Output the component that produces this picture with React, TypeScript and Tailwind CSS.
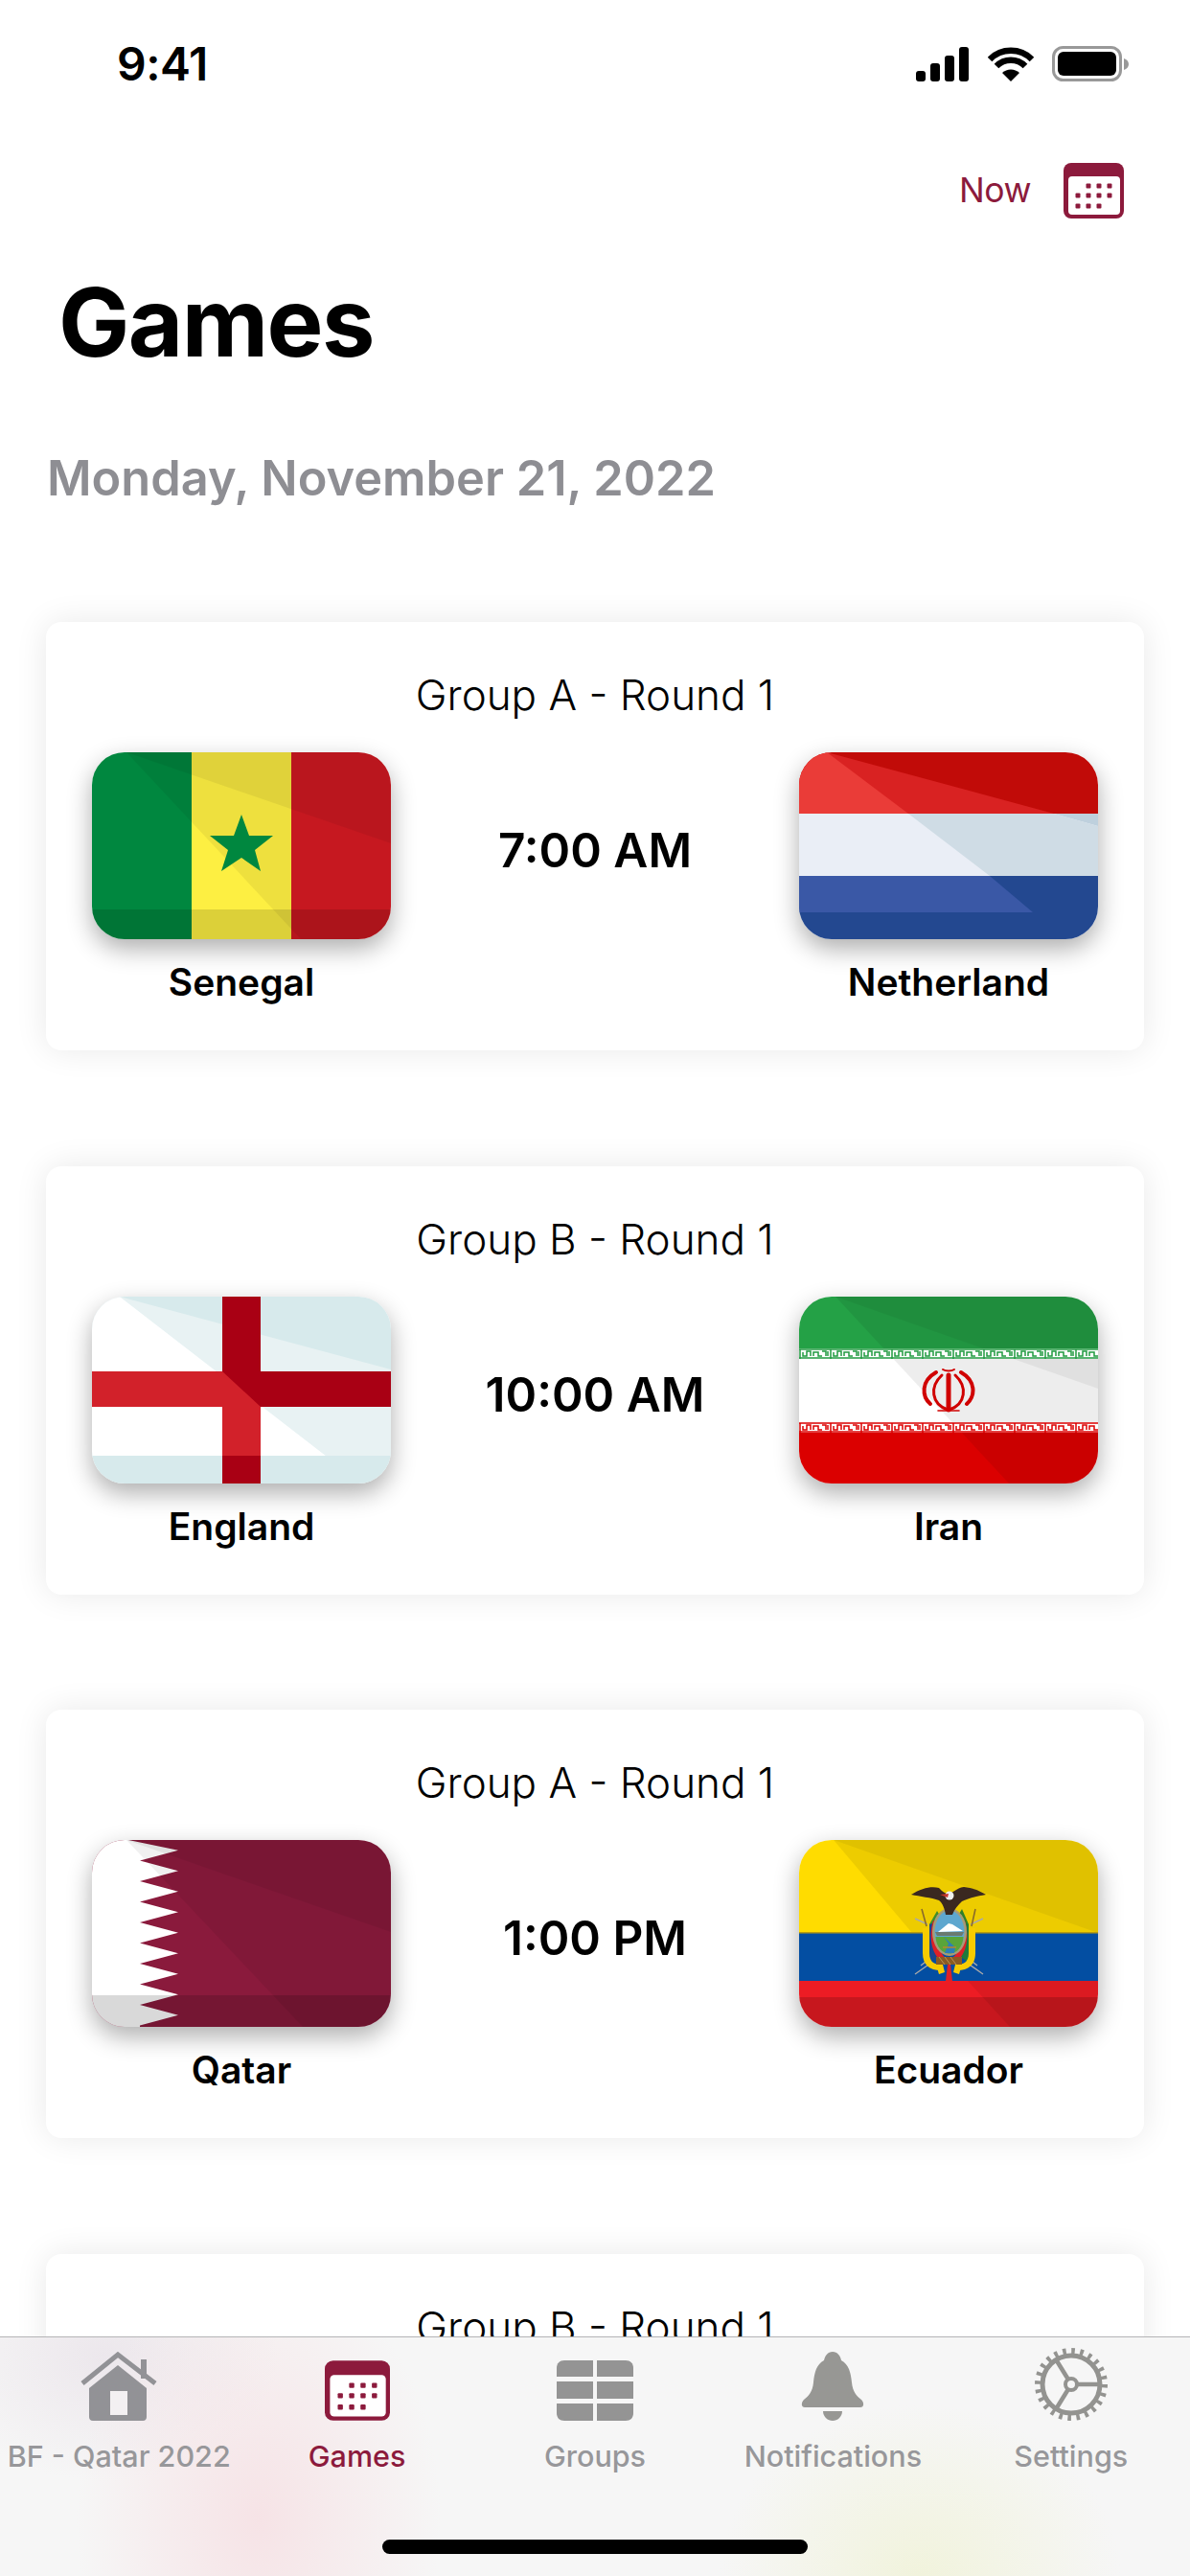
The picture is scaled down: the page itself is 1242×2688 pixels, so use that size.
const MAROON = "#8c1a3c";

function StatusIcons() {
  return (
    <div className="flex items-center">
      <svg width="56" height="36" viewBox="0 0 56 36" fill="#000">
        <rect x="0" y="25" width="10" height="11" rx="3" />
        <rect x="15" y="17" width="10" height="19" rx="3" />
        <rect x="30" y="9" width="10" height="27" rx="3" />
        <rect x="45" y="0" width="10" height="36" rx="3" />
      </svg>
      <svg className="ml-[19px]" width="48" height="36" viewBox="0 0 48 36" fill="none">
        <path d="M24 36 L15 27 A13 13 0 0 1 33 27 Z" fill="#000" />
        <path d="M9 20 A21 21 0 0 1 39 20" stroke="#000" strokeWidth="6.5" />
        <path d="M2 13 A31 31 0 0 1 46 13" stroke="#000" strokeWidth="6.5" />
      </svg>
      <svg className="ml-[19px]" width="80" height="38" viewBox="0 0 80 38" fill="none">
        <rect x="1.5" y="1.5" width="70" height="34" rx="10" stroke="#999" strokeWidth="3" />
        <rect x="6" y="6" width="61" height="25" rx="6" fill="#000" />
        <path d="M75 13 C78 14 80 16 80 19 C80 22 78 24 75 25 Z" fill="#999" />
      </svg>
    </div>
  );
}

function CalendarIcon({ w, h }: { w: number; h: number }) {
  const dots = [
    [26, 24], [37, 24], [48, 24],
    [15, 34], [26, 34], [37, 34], [48, 34],
    [15, 45], [26, 45], [37, 45],
  ];
  return (
    <svg width={w} height={h} viewBox="0 0 63 58">
      <rect x="0" y="0" width="63" height="58" rx="8" fill={MAROON} />
      <rect x="5" y="14" width="54" height="40" rx="4" fill="#fff" />
      {dots.map(([x, y]) => (
        <rect key={`${x}-${y}`} x={x - 2.5} y={y - 2.5} width="5" height="5" rx="1" fill={MAROON} />
      ))}
    </svg>
  );
}

function Senegal() {
  return (
    <svg viewBox="0 0 312 195" className="block w-full h-full">
      <rect width="104" height="195" fill="#00873f" />
      <rect x="104" width="104" height="195" fill="#fdef42" />
      <rect x="208" width="104" height="195" fill="#d31a22" />
      <polygon points="36,0 312,0 312,195 218,195" fill="#000" opacity="0.06" />
      <polygon points="36,0 312,0 312,95" fill="#000" opacity="0.06" />
      <rect y="164" width="312" height="31" fill="#000" opacity="0.13" />
      <polygon fill="#00873f" points="156,65 164,87 189,87 170,102 176,124 156,110 135,124 142,102 123,87 148,87" />
    </svg>
  );
}

function Netherlands() {
  return (
    <svg viewBox="0 0 312 195" className="block w-full h-full">
      <rect width="312" height="64" fill="#c10b08" />
      <rect y="64" width="312" height="65" fill="#eaeef6" />
      <rect y="129" width="312" height="66" fill="#234890" />
      <polygon points="29,0 266,64 0,64 0,0" fill="#d92222" />
      <polygon points="266,64 312,64 312,77" fill="#bed0dd" />
      <polygon points="114,64 266,64 312,77 312,129 199,129" fill="#cfdce5" />
      <polygon points="0,0 29,0 114,64 0,64" fill="#ea3c38" />
      <polygon points="0,129 199,129 244,167 0,167" fill="#3a58a6" />
    </svg>
  );
}

function England() {
  return (
    <svg viewBox="0 0 312 195" className="block w-full h-full">
      <rect width="312" height="195" fill="#d7eaec" />
      <polygon points="29,0 312,76 312,166 244,166" fill="#e8f2f3" />
      <polygon points="0,0 29,0 244,166 0,166" fill="#fff" />
      <rect x="136" width="40" height="195" fill="#a90014" />
      <rect y="78" width="312" height="37" fill="#a90014" />
      <polygon points="0,78 136,78 176,115 176,166 136,166 136,115 0,115" fill="#d2212a" />
    </svg>
  );
}

function IranEmblem() {
  return (
    <g fill="none" stroke="#d00000" strokeLinecap="round">
      <path d="M156 82 V118" strokeWidth="5" />
      <path d="M149 82 C136 94 138 112 155 118" strokeWidth="3" />
      <path d="M163 82 C176 94 174 112 157 118" strokeWidth="3" />
      <path d="M143 79 C127 88 128 104 137 112" strokeWidth="4" />
      <path d="M169 79 C185 88 184 104 175 112" strokeWidth="4" />
      <path d="M150 76 C153 78 159 78 162 76" strokeWidth="2" />
      <path d="M145 119 H167" strokeWidth="1.6" />
    </g>
  );
}

function Iran() {
  const kufi = "M0 1 H32 M0 10 H32 M1 1 V11 M4 4 V8 H8 V3 H12 V8 M15 8 V4 H20 V8 H24 M24 3 H28 V8 M30 3 V8";
  return (
    <svg viewBox="0 0 312 195" className="block w-full h-full">
      <defs>
        <pattern id="kufi-g" width="32" height="11" patternUnits="userSpaceOnUse" y="54">
          <path d={kufi} fill="none" stroke="#1f9a40" strokeWidth="1.5" />
        </pattern>
        <pattern id="kufi-r" width="32" height="11" patternUnits="userSpaceOnUse" y="131">
          <path d={kufi} fill="none" stroke="#db0000" strokeWidth="1.5" />
        </pattern>
      </defs>
      <rect width="312" height="54" fill="#24a146" />
      <rect y="54" width="312" height="87" fill="#fff" />
      <rect y="141" width="312" height="54" fill="#db0000" />
      <polygon points="38,0 312,0 312,195 219,195" fill="#000" opacity="0.07" />
      <polygon points="38,0 312,0 312,96" fill="#000" opacity="0.05" />
      <rect y="54" width="312" height="11" fill="#fff" />
      <rect y="54" width="312" height="11" fill="url(#kufi-g)" />
      <rect y="131" width="312" height="11" fill="#fff" />
      <rect y="131" width="312" height="11" fill="url(#kufi-r)" />
      <IranEmblem />
    </svg>
  );
}

function Qatar() {
  const pts: string[] = ["38,0"];
  for (let i = 0; i < 9; i++) {
    pts.push(`90,${10.8 + i * 21.5}`);
    pts.push(`50,${21.5 + i * 21.5}`);
  }
  return (
    <svg viewBox="0 0 312 195" className="block w-full h-full">
      <rect width="312" height="195" fill="#8a1a3c" />
      <polygon points={`0,0 ${pts.join(" ")} 50,195 0,195`} fill="#fff" />
      <polygon points="36,0 312,0 312,195 220,195" fill="#000" opacity="0.06" />
      <polygon points="36,0 312,0 312,96" fill="#000" opacity="0.06" />
      <rect y="162" width="312" height="33" fill="#000" opacity="0.15" />
    </svg>
  );
}

function EcuadorArms() {
  return (
    <g>
      {/* spears */}
      <path d="M121 82 L134 88 M192 82 L179 88 M121 140 L138 128 M192 140 L175 128 M127 131 L136 124 M186 131 L177 124" stroke="#a9a9a9" strokeWidth="1.4" />
      <path d="M128 72 L133 90 M184 72 L180 90" stroke="#8a6a2a" strokeWidth="1.6" />
      {/* flags */}
      <path d="M136 88 L147 78 V120 L136 128 Z" fill="#19478f" />
      <path d="M177 88 L166 78 V120 L177 128 Z" fill="#1f7a3c" />
      {/* palm and laurel */}
      <path d="M136 88 L144 74 L150 84 Z" fill="#3f8c2a" />
      <path d="M177 88 L170 72 L163 84 Z" fill="#2f7f2a" />
      {/* yellow drape */}
      <path d="M129 92 H136 V118 C136 128 142 130 148 130 V136 C136 136 129 130 129 118 Z" fill="#f7cc00" />
      <path d="M184 92 H177 V118 C177 128 171 130 165 130 V136 C177 136 184 130 184 118 Z" fill="#f7cc00" />
      {/* red drape */}
      <path d="M140 84 C134 104 140 124 152 128 V122 C146 118 142 100 146 86 Z" fill="#dd2127" />
      <path d="M173 84 C179 104 173 124 161 128 V122 C167 118 171 100 167 86 Z" fill="#dd2127" />
      {/* oval */}
      <ellipse cx="157" cy="96" rx="18" ry="25" fill="#a59c78" />
      <ellipse cx="157" cy="96" rx="15.5" ry="22.5" fill="#5ea7cf" />
      <path d="M142 96 H172 L170 100 H144 Z" fill="#6a7a70" />
      <path d="M145 96 L156 87 L160 88 L171 95 Z" fill="#fff" />
      <path d="M142.5 101 H171.5 C171 112 164 118.5 157 118.5 C150 118.5 143 112 142.5 101 Z" fill="#59a53a" />
      <path d="M151 101 L163 112 L162 118 H152 L156 108 Z" fill="#2b7fb8" />
      <path d="M150 112 H164" stroke="#b88a2a" strokeWidth="1.4" />
      {/* fasces */}
      <rect x="143" y="122" width="27" height="8" fill="#8a5a22" />
      <path d="M146 122 L152 130 M152 122 L158 130 M158 122 L164 130" stroke="#c9a15a" strokeWidth="0.8" />
      {/* ribbons */}
      <path d="M143 130 L150 130 L152 138 L146 140 Z" fill="#f7cc00" />
      <path d="M170 130 L163 130 L161 138 L167 140 Z" fill="#f7cc00" />
      <path d="M155 130 H158 L160 147 H153 Z" fill="#dd2127" />
      {/* condor */}
      <path d="M117 57 C128 50 138 48 146 50 C150 54 152 56 156 56 C160 56 164 50 172 49 C182 50 190 54 195 57 C184 59 176 61 170 64 C166 68 162 72 160 78 H153 C152 72 150 66 146 63 C138 60 126 59 117 57 Z" fill="#3a2820" />
      <circle cx="157" cy="58" r="4.5" fill="#eeeeee" />
      <path d="M147 57 L156 56 L155 60 Z" fill="#c9352a" />
    </g>
  );
}

function Ecuador() {
  return (
    <svg viewBox="0 0 312 195" className="block w-full h-full">
      <rect width="312" height="97" fill="#ffdc00" />
      <rect y="97" width="312" height="50" fill="#034ea2" />
      <rect y="147" width="312" height="48" fill="#ed1c24" />
      <polygon points="36,0 312,0 312,97 118,97" fill="#000" opacity="0.07" />
      <polygon points="36,0 312,0 312,97" fill="#000" opacity="0.05" />
      <polygon points="176,147 312,147 312,195 220,195" fill="#000" opacity="0.07" />
      <rect y="96" width="312" height="1.5" fill="#b59a10" />
      <rect y="164" width="312" height="31" fill="#000" opacity="0.16" />
      <EcuadorArms />
    </svg>
  );
}

function Team({ name, children }: { name: string; children: React.ReactNode }) {
  return (
    <div className="w-[312px] flex flex-col items-center">
      <div className="w-[312px] h-[195px] rounded-[34px] overflow-hidden shadow-[0_10px_26px_rgba(0,0,0,0.32)]">
        {children}
      </div>
      <div className="mt-[22px] h-[46px] leading-[46px] text-[39px] font-semibold text-black">{name}</div>
    </div>
  );
}

function GameCard({ group, time, home, away }: {
  group: string;
  time?: string;
  home?: { name: string; flag: React.ReactNode };
  away?: { name: string; flag: React.ReactNode };
}) {
  return (
    <div className="h-[447px] shrink-0 bg-white rounded-[16px] shadow-[0_0_34px_rgba(0,0,0,0.09)]">
      <div className="pt-[50px] h-[136px] text-center text-[44px] leading-[52px] font-light text-black">{group}</div>
      {home && away && (
        <div className="flex px-[48px]">
          <Team name={home.name}>{home.flag}</Team>
          <div className="flex-1 h-[205px] flex items-center justify-center text-[49.5px] font-semibold text-black">{time}</div>
          <Team name={away.name}>{away.flag}</Team>
        </div>
      )}
    </div>
  );
}

function TabLabel({ label, active }: { label: string; active?: boolean }) {
  return (
    <span className={`mt-[18px] text-[30.5px] leading-[38px] font-medium whitespace-nowrap ${active ? "text-[#8c1a3c]" : "text-[#97979a]"}`}>
      {label}
    </span>
  );
}

function TabBar() {
  return (
    <div className="absolute left-0 right-0 bottom-0 h-[250px] border-t-[1.5px] border-[#b4b4b6] bg-[#f6f6f6] bg-[radial-gradient(ellipse_190px_270px_at_270px_190px,#f6e3e6,transparent),radial-gradient(ellipse_210px_180px_at_960px_250px,#f1f3dc,transparent),radial-gradient(ellipse_180px_130px_at_110px_20px,#ece7ec,transparent)]">
      <div className="grid grid-cols-5 h-[143px]">
        <div className="flex flex-col items-center justify-end">
          <svg width="82" height="72" viewBox="0 0 82 72">
            <path d="M40 14 L70 38 V68 C70 70 69 72 66 72 H14 C11 72 10 70 10 68 V38 Z" fill="#929296" />
            <rect x="32" y="41" width="18" height="25" fill="#f3f0f2" />
            <path d="M3 33 L40 3 L79 33" fill="none" stroke="#929296" strokeWidth="5" />
            <rect x="64" y="8" width="6" height="20" fill="#929296" />
          </svg>
          <TabLabel label="BF - Qatar 2022" />
        </div>
        <div className="flex flex-col items-center justify-end">
          <CalendarIcon w={68} h={63} />
          <TabLabel label="Games" active />
        </div>
        <div className="flex flex-col items-center justify-end">
          <svg width="80" height="63" viewBox="0 0 80 63" fill="#949494">
            <path d="M8 0 H38 V17 H0 V8 C0 3 3 0 8 0 Z" />
            <path d="M42 0 H72 C77 0 80 3 80 8 V17 H42 Z" />
            <rect x="0" y="22" width="38" height="18" />
            <rect x="42" y="22" width="38" height="18" />
            <path d="M0 45 H38 V63 H8 C3 63 0 60 0 55 Z" />
            <path d="M42 45 H80 V55 C80 60 77 63 72 63 H42 Z" />
          </svg>
          <TabLabel label="Groups" />
        </div>
        <div className="flex flex-col items-center justify-end">
          <svg width="66" height="72" viewBox="0 0 66 72" fill="#979794">
            <path d="M33 0 C38 0 41 4 42 9 C50 13 52 22 53 32 C54 42 58 46 63 50 C66 53 66 58 62 58 H4 C0 58 0 53 3 50 C8 46 12 42 13 32 C14 22 16 13 24 9 C25 4 28 0 33 0 Z" />
            <path d="M23 62 H43 C43 68 38 72 33 72 C28 72 23 68 23 62 Z" />
          </svg>
          <TabLabel label="Notifications" />
        </div>
        <div className="flex flex-col items-center justify-end">
          <svg width="76" height="76" viewBox="0 0 76 76" fill="none" stroke="#939390">
            <circle cx="38" cy="38" r="30" strokeWidth="5" />
            <circle cx="38" cy="38" r="34" strokeWidth="8" strokeDasharray="3.5 5.4" />
            <circle cx="38" cy="38" r="6" strokeWidth="4" />
            <path d="M44 38 H68 M35 33 L22 12 M35 43 L22 64" strokeWidth="4.5" />
          </svg>
          <TabLabel label="Settings" />
        </div>
      </div>
      <div className="mt-[68px] mx-auto w-[444px] h-[15px] rounded-full bg-black" />
    </div>
  );
}

export default function App() {
  return (
    <div className="relative w-[1242px] h-[2688px] overflow-hidden bg-white font-['Inter','Liberation_Sans',sans-serif]">
      {/* status bar */}
      <div className="h-[134px] flex items-center justify-between pl-[122px] pr-[64px]">
        <span className="text-[48px] font-semibold text-black tracking-[-0.5px]">9:41</span>
        <StatusIcons />
      </div>

      {/* now button */}
      <div className="h-[130px] flex items-center justify-end pr-[69px]">
        <span className="text-[35.5px] tracking-[-0.5px] text-[#8c1a3c] mr-[34px]">Now</span>
        <CalendarIcon w={63} h={58} />
      </div>

      <h1 className="mt-[2px] pl-[61px] h-[140px] leading-[140px] text-[99px] font-bold text-black tracking-[-1.5px]">Games</h1>

      <div className="mt-[63px] pl-[49px] h-[60px] leading-[60px] text-[50.5px] font-semibold text-[#8e8e93]">
        Monday, November 21, 2022
      </div>

      <div className="mt-[120px] mx-[48px] flex flex-col gap-[120.5px]">
        <GameCard
          group="Group A - Round 1"
          time="7:00 AM"
          home={{ name: "Senegal", flag: <Senegal /> }}
          away={{ name: "Netherland", flag: <Netherlands /> }}
        />
        <GameCard
          group="Group B - Round 1"
          time="10:00 AM"
          home={{ name: "England", flag: <England /> }}
          away={{ name: "Iran", flag: <Iran /> }}
        />
        <GameCard
          group="Group A - Round 1"
          time="1:00 PM"
          home={{ name: "Qatar", flag: <Qatar /> }}
          away={{ name: "Ecuador", flag: <Ecuador /> }}
        />
        {/* fourth card runs under the tab bar, only its title peeks out */}
        <GameCard group="Group B - Round 1" />
      </div>

      <TabBar />
    </div>
  );
}
